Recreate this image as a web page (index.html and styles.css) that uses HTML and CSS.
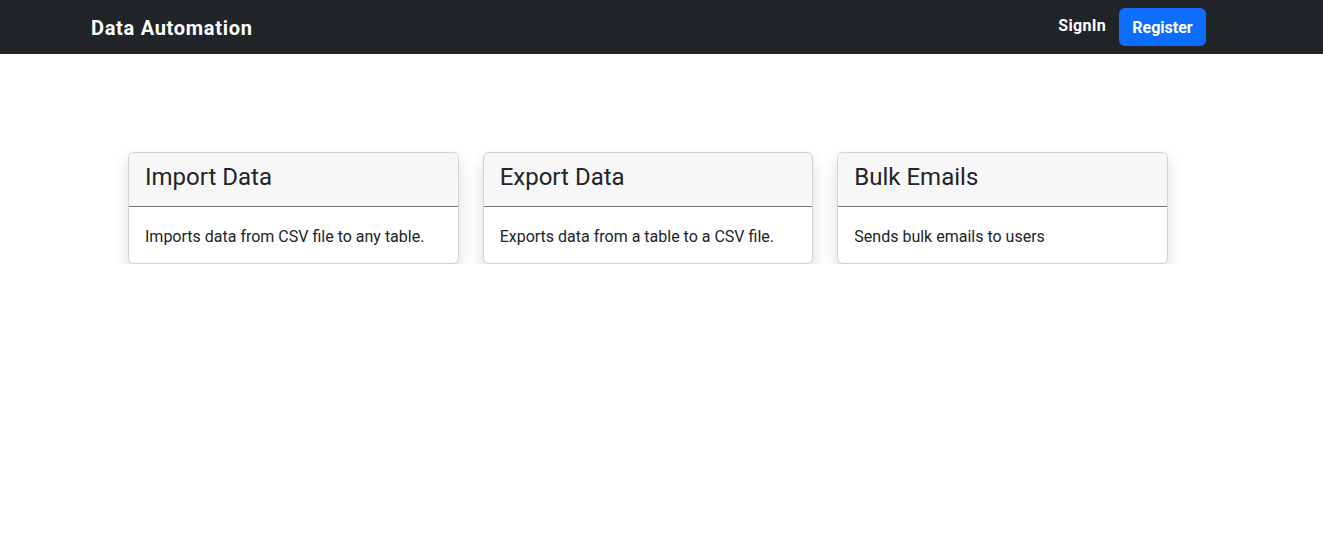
FILE: index.html
```html
<!DOCTYPE html>
<html lang="en">
<head>
<meta charset="utf-8">
<title>Data Automation</title>
<link rel="stylesheet" href="styles.css">
</head>
<body>
<nav class="navbar">
  <a class="brand" href="#">Data Automation</a>
  <div class="nav-right">
    <a class="nav-link" href="#">SignIn</a>
    <a class="btn-register" href="#">Register</a>
  </div>
</nav>
<main class="cards">
  <div class="card">
    <div class="card-header"><h4 class="card-title">Import Data</h4></div>
    <div class="card-body"><p class="card-text">Imports data from CSV file to any table.</p></div>
  </div>
  <div class="card">
    <div class="card-header"><h4 class="card-title">Export Data</h4></div>
    <div class="card-body"><p class="card-text">Exports data from a table to a CSV file.</p></div>
  </div>
  <div class="card">
    <div class="card-header"><h4 class="card-title">Bulk Emails</h4></div>
    <div class="card-body"><p class="card-text">Sends bulk emails to users</p></div>
  </div>
</main>
</body>
</html>
```
FILE: styles.css
```css
* { box-sizing: border-box; }
html, body { margin: 0; padding: 0; }
body {
  font-family: Roboto, "Noto Sans", "Liberation Sans", sans-serif;
  font-size: 16px;
  line-height: 1.5;
  color: #212529;
  background: #fff;
}
a { text-decoration: none; }
.navbar {
  height: 54px;
  background: #212529;
  display: flex;
  align-items: center;
  justify-content: space-between;
  padding: 0 117px 0 91px;
}
.brand {
  color: #fff;
  font-weight: 700;
  font-size: 20px;
  line-height: 30px;
  letter-spacing: 0.7px;
  padding-top: 2px;
}
.nav-right {
  display: flex;
  align-items: center;
  gap: 13px;
}
.nav-link {
  color: #fff;
  font-weight: 700;
  font-size: 16px;
  line-height: 24px;
  letter-spacing: 0.3px;
  margin-top: -3px;
}
.btn-register {
  display: block;
  height: 38px;
  padding: 7px 12px 5px;
  background: #0d6efd;
  color: #fff;
  font-weight: 700;
  border-radius: 6px;
  line-height: 26px;
  width: 87px;
  text-align: center;
}
.cards {
  display: grid;
  grid-template-columns: repeat(3, 1fr);
  gap: 24px;
  width: 1040px;
  margin: 98px 0 0 128px;
  align-items: start;
}
.card {
  border: 1px solid rgba(0,0,0,0.175);
  border-radius: 6px;
  box-shadow: 0 8px 16px rgba(0,0,0,0.15);
  background: #fff;
}
.card-header {
  background: #f7f7f7;
  padding: 10px 16px 6px;
  border-bottom: 1px solid #6c757d;
  border-radius: 5px 5px 0 0;
}
.card-title {
  margin: 0 0 8px;
  font-size: 24px;
  font-weight: 400;
  line-height: 1.2;
}
.card-body {
  padding: 18px 16px 14px;
}
.card-text {
  margin: 0;
  font-size: 16px;
  line-height: 24px;
}
```
